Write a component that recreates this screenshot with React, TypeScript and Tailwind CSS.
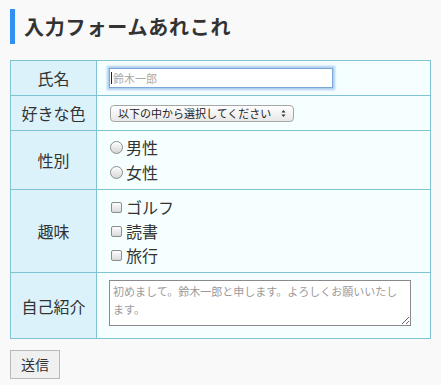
import React from 'react';

const jp = { fontFamily: '"Noto Sans CJK JP", "Noto Sans", sans-serif' };

function Radio() {
  return (
    <span className="inline-block w-[13px] h-[13px] rounded-full border border-[#8c8c8c] bg-gradient-to-b from-[#fdfdfd] to-[#d6d6d6] shadow-[inset_0_1px_1px_rgba(255,255,255,0.9)] mr-[3px] shrink-0" />
  );
}

function Check() {
  return (
    <span className="inline-block w-[11px] h-[11px] rounded-[2px] border border-[#8c8c8c] bg-gradient-to-b from-[#fdfdfd] to-[#dadada] mr-[4px] shrink-0" />
  );
}

function Row({ label, h, first, children, contentClass }: { label: string; h: string; first?: boolean; children: React.ReactNode; contentClass?: string }) {
  return (
    <div className={`flex ${h} ${first ? '' : 'border-t border-[#80c4d3]'}`}>
      <div className="w-[86px] shrink-0 bg-[#dbf2fb] border-r border-[#80c4d3] flex items-center justify-center text-[16px] text-[#333]">
        {label}
      </div>
      <div className={`flex-1 bg-[#f5ffff] pl-[12px] ${contentClass ?? 'flex items-center'}`}>{children}</div>
    </div>
  );
}

export default function App() {
  return (
    <div className="min-h-screen bg-[#f9f9f9] px-[10px] pt-[9px] text-[#333]" style={jp}>
      <h1 className="h-[35px] border-l-[5px] border-[#3190f5] pl-[9px] flex items-center text-[20px] font-bold text-[#333] tracking-[0.8px]">
        入力フォームあれこれ
      </h1>

      <div className="mt-[16px] w-[421px] border border-[#80c4d3]">
        <Row label="氏名" h="h-[34px]" first>
          <div className="relative flex">
            <input
              type="text"
              placeholder="鈴木一郎"
              className="w-[224px] h-[20px] bg-white border border-[#7ba7d9] shadow-[0_0_2px_2px_rgba(110,165,225,0.55)] px-[3px] text-[11px] text-[#333] placeholder:text-[#a9a9a9] outline-none"
              style={jp}
            />
            <span className="absolute left-[2px] top-[4px] w-px h-[12px] bg-[#222]" />
          </div>
        </Row>
        <Row label="好きな色" h="h-[35px]">
          <div className="relative flex ml-[1px]">
            <select
              className="appearance-none w-[184px] h-[17px] rounded-[4px] border border-[#a6a6a6] bg-gradient-to-b from-[#ffffff] to-[#e8e8e8] pl-[7px] text-[11px] leading-[15px] text-[#222] outline-none"
              style={jp}
            >
              <option>以下の中から選択してください</option>
            </select>
            <svg className="absolute right-[8px] top-[4px] pointer-events-none" width="5" height="9" viewBox="0 0 5 9">
              <path d="M0.5 3.5 L2.5 1 L4.5 3.5 Z" fill="#333" />
              <path d="M0.5 5.5 L2.5 8 L4.5 5.5 Z" fill="#333" />
            </svg>
          </div>
        </Row>
        <Row label="性別" h="h-[59px]" contentClass="flex flex-col justify-center pl-[13px]">
          <label className="flex items-center h-[25px] text-[16px] leading-[25px]">
            <Radio />男性
          </label>
          <label className="flex items-center h-[25px] text-[16px] leading-[25px]">
            <Radio />女性
          </label>
        </Row>
        <Row label="趣味" h="h-[83px]" contentClass="flex flex-col justify-center pl-[14px]">
          {['ゴルフ', '読書', '旅行'].map((t) => (
            <label key={t} className="flex items-center h-[24px] text-[16px] leading-[24px]">
              <Check />{t}
            </label>
          ))}
        </Row>
        <Row label="自己紹介" h="h-[66px]" contentClass="pt-[7px] pl-[12px]">
          <textarea
            placeholder="初めまして。鈴木一郎と申します。よろしくお願いいたします。"
            className="block w-[302px] h-[46px] bg-white border border-[#8a8a8a] px-[3px] py-[1px] text-[11px] leading-[18px] text-[#333] placeholder:text-[#9a9a9a] outline-none"
            style={jp}
          />
        </Row>
      </div>

      <button
        className="mt-[11px] w-[50px] h-[29px] bg-[#f0f0f0] border border-[#b9b9b9] text-[14px] text-[#333] flex items-center justify-center"
        style={jp}
      >
        送信
      </button>
    </div>
  );
}
